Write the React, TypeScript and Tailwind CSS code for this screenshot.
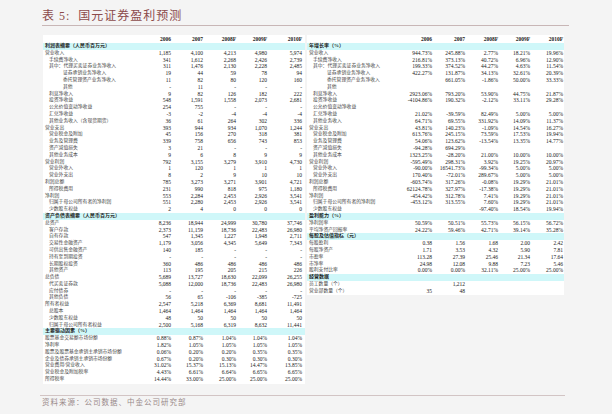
type Row = [string, number, string[], boolean?]

const L: Row[] = [
  ['利润表摘要（人民币百万元）', 0, [], true],
  ['营业收入', 0, ['1,185', '4,100', '4,213', '4,980', '5,974']],
  ['手续费净收入', 1, ['341', '1,612', '2,268', '2,426', '2,739']],
  ['其中：代理买卖证券业务净收入', 1, ['311', '1,476', '2,130', '2,228', '2,485']],
  ['证券承销业务净收入', 3, ['19', '44', '59', '78', '94']],
  ['委托管理资产业务净收入', 3, ['11', '82', '80', '120', '160']],
  ['其他', 3, ['-', '11', '-', '-', '-']],
  ['利息净收入', 1, ['9', '82', '126', '182', '222']],
  ['投资净收益', 1, ['548', '1,591', '1,558', '2,073', '2,681']],
  ['公允价值变动净收益', 1, ['254', '755', '-', '-', '-']],
  ['汇兑净收益', 1, ['-3', '-2', '-4', '-4', '-4']],
  ['其他业务收入（含现货期货）', 1, ['36', '61', '264', '302', '336']],
  ['营业支出', 0, ['393', '944', '934', '1,070', '1,244']],
  ['营业税金及附加', 1, ['45', '156', '270', '318', '381']],
  ['业务及管理费', 1, ['339', '758', '656', '743', '853']],
  ['资产减值损失', 1, ['3', '21', '-', '-', '-']],
  ['其他业务成本', 1, ['9', '6', '8', '9', '9']],
  ['营业利润', 0, ['792', '3,155', '3,279', '3,910', '4,730']],
  ['营业外收入', 1, ['1', '120', '1', '1', '1']],
  ['营业外支出', 1, ['8', '2', '9', '10', '10']],
  ['利润总额', 0, ['785', '3,273', '3,271', '3,901', '4,721']],
  ['所得税费用', 1, ['231', '990', '818', '975', '1,180']],
  ['净利润', 0, ['553', '2,284', '2,453', '2,926', '3,541']],
  ['归属于母公司所有者的净利润', 1, ['551', '2,280', '2,453', '2,926', '3,541']],
  ['少数股东权益', 1, ['2', '4', '0', '0', '0']],
  ['资产负债表摘要（人民币百万元）', 0, [], true],
  ['总资产', 0, ['8,236', '18,944', '24,999', '30,780', '37,746']],
  ['客户存款', 1, ['2,373', '11,159', '18,736', '22,483', '26,980']],
  ['自有存款', 1, ['547', '1,345', '1,227', '1,948', '2,711']],
  ['交易性金融资产', 1, ['1,179', '3,056', '4,345', '5,649', '7,343']],
  ['可供出售金融资产', 1, ['140', '185', '-', '-', '-']],
  ['持有至到期投资', 1, ['-', '-', '-', '-', '-']],
  ['长期股权投资', 1, ['360', '486', '486', '486', '486']],
  ['其他资产', 1, ['113', '195', '205', '215', '226']],
  ['总负债', 0, ['5,689', '13,727', '18,630', '22,099', '26,255']],
  ['代买卖证券款', 1, ['5,088', '12,000', '18,736', '22,483', '26,980']],
  ['应付债券', 1, ['-', '-', '-', '-', '-']],
  ['其他负债', 1, ['56', '65', '-106', '-385', '-725']],
  ['所有者权益', 0, ['2,547', '5,218', '6,369', '8,681', '11,491']],
  ['总股本', 1, ['1,464', '1,464', '1,464', '1,464', '1,464']],
  ['少数股东权益', 1, ['48', '50', '50', '50', '50']],
  ['归属于母公司所有者权益', 1, ['2,500', '5,168', '6,319', '8,632', '11,441']],
  ['主要驱动因素（%）', 0, [], true],
  ['股票基金交易额市场份额', 0, ['0.88%', '0.87%', '1.04%', '1.04%', '1.04%']],
  ['净利率', 0, ['1.82%', '1.05%', '1.05%', '1.05%', '1.05%']],
  ['股票及股票基金承销主承销市场份额', 0, ['0.06%', '0.20%', '0.20%', '0.35%', '0.35%']],
  ['企业及债券承销主承销市场份额', 0, ['0.67%', '0.20%', '0.30%', '0.30%', '0.30%']],
  ['营业费用/营业收入', 0, ['31.02%', '15.37%', '15.13%', '14.47%', '13.85%']],
  ['营业税金及附加税率', 0, ['4.43%', '6.61%', '6.64%', '6.65%', '6.65%']],
  ['所得税率', 0, ['14.44%', '33.00%', '25.00%', '25.00%', '25.00%']],
]

const R: Row[] = [
  ['年增长率（%）', 0, [], true],
  ['营业收入', 0, ['944.73%', '245.88%', '2.77%', '18.21%', '19.96%']],
  ['手续费净收入', 1, ['216.81%', '373.13%', '40.72%', '6.96%', '12.90%']],
  ['其中：代理买卖证券业务净收入', 1, ['199.33%', '374.52%', '44.27%', '4.63%', '11.54%']],
  ['证券承销业务净收入', 3, ['422.27%', '131.87%', '34.13%', '32.61%', '20.39%']],
  ['委托管理资产业务净收入', 3, ['', '661.05%', '-1.86%', '50.00%', '33.33%']],
  ['其他', 3, []],
  ['利息净收入', 1, ['2923.06%', '793.20%', '53.90%', '44.75%', '21.87%']],
  ['投资净收益', 1, ['-4104.86%', '190.32%', '-2.12%', '33.11%', '29.28%']],
  ['公允价值变动净收益', 1, []],
  ['汇兑净收益', 1, ['21.02%', '-39.59%', '82.49%', '5.00%', '5.00%']],
  ['其他业务收入', 1, ['64.71%', '69.55%', '331.92%', '14.09%', '11.37%']],
  ['营业支出', 0, ['43.81%', '140.23%', '-1.09%', '14.54%', '16.27%']],
  ['营业税金及附加', 1, ['613.76%', '245.15%', '73.59%', '17.53%', '19.94%']],
  ['业务及管理费', 1, ['54.06%', '123.62%', '-13.54%', '13.35%', '14.77%']],
  ['资产减值损失', 1, ['-94.28%', '694.29%', '', '', '']],
  ['其他业务成本', 1, ['1323.25%', '-28.20%', '21.00%', '10.00%', '10.00%']],
  ['营业利润', 0, ['-595.49%', '298.31%', '3.92%', '19.25%', '20.97%']],
  ['营业外收入', 1, ['-90.00%', '16541.73%', '-99.34%', '5.00%', '5.00%']],
  ['营业外支出', 1, ['170.40%', '-72.01%', '289.67%', '5.00%', '5.00%']],
  ['利润总额', 0, ['-603.74%', '317.26%', '-0.08%', '19.29%', '21.01%']],
  ['所得税费用', 1, ['62124.78%', '327.97%', '-17.38%', '19.29%', '21.01%']],
  ['净利润', 0, ['-454.42%', '312.78%', '7.41%', '19.29%', '21.01%']],
  ['归属于母公司所有者的净利润', 1, ['-453.12%', '313.55%', '7.60%', '19.29%', '21.01%']],
  ['少数股东权益', 1, ['', '', '-97.40%', '18.54%', '19.94%']],
  ['盈利能力（%）', 0, [], true],
  ['净利润率', 0, ['50.59%', '50.51%', '55.73%', '56.15%', '56.72%']],
  ['平均净资产回报率', 0, ['24.22%', '59.46%', '42.71%', '39.14%', '35.28%']],
  ['每股及估值指标（元）', 0, [], true],
  ['每股盈利', 0, ['0.38', '1.56', '1.68', '2.00', '2.42']],
  ['每股净资产', 0, ['1.71', '3.53', '4.32', '5.90', '7.81']],
  ['市盈率', 0, ['113.28', '27.39', '25.46', '21.34', '17.64']],
  ['市净率', 0, ['24.98', '12.08', '9.88', '7.23', '5.46']],
  ['股利支付比率', 0, ['0.00%', '0.00%', '32.11%', '25.00%', '25.00%']],
  ['经营数据', 0, [], true],
  ['员工数量（个）', 0, ['', '1,212', '', '', '']],
  ['营业部数量（个）', 0, ['35', '48', '', '', '']],
]

const years = ['2006', '2007', '2008F', '2009F', '2010F']
const indent = ['pl-[2px]', 'pl-[6px]', 'pl-[14px]', 'pl-[20px]']

function Table({ rows, cols }: { rows: Row[]; cols: string }) {
  return (
    <div className="bg-white pt-[1px] pb-[1px]">
      <div className={`grid ${cols} h-[7px] items-center font-bold`}>
        <div />
        {years.map((y) => (
          <div key={y} className="text-right pr-[1px]">{y}</div>
        ))}
      </div>
      {rows.map(([label, ind, vals, head], i) =>
        head ? (
          <div key={i} className="h-[6.8px] bg-[#cff7f9] pl-[2px] font-bold text-[5px] flex items-center">
            {label}
          </div>
        ) : (
          <div key={i} className={`grid ${cols} h-[6.8px] items-center`}>
            <div className={`${indent[ind]} whitespace-nowrap text-[4.8px] text-[#444]`}>{label}</div>
            {years.map((y, j) => (
              <div key={y} className="text-right pr-[1px] whitespace-nowrap">{vals[j] ?? ''}</div>
            ))}
          </div>
        ),
      )}
    </div>
  )
}

export default function App() {
  return (
    <div
      className="w-[612px] h-[414px] bg-[#f4f4f4] overflow-hidden text-[#222]"
      style={{ fontFamily: '"Liberation Serif", "Noto Sans CJK SC", serif' }}
    >
      <div className="pl-[42px] pt-[9px] w-[569px]">
        <div className="text-[12px] leading-[14px] text-[#8c4b4b] border-b border-[#c8b6b6] pb-[2px] tracking-[1px]">
          表 5:&nbsp; 国元证券盈利预测
        </div>
      </div>
      <div className="flex gap-[2px] pl-[43px] pt-[9px] text-[5.5px] leading-[6.8px]">
        <div className="w-[262px]">
          <Table rows={L} cols="grid-cols-[97px_32px_32px_33px_31px_35px]" />
        </div>
        <div className="w-[257px] self-start">
          <Table rows={R} cols="grid-cols-[94px_32px_33px_33px_32px_33px]" />
        </div>
      </div>
      <div className="pl-[40px] w-[565px]">
        <div className="border-t border-[#d2c4c4] mt-[11px]" />
        <div className="pl-[2px] pt-[1px] text-[7.5px] text-[#9a8a8a] tracking-[1px]">资料来源：公司数据、中金公司研究部</div>
      </div>
    </div>
  )
}
